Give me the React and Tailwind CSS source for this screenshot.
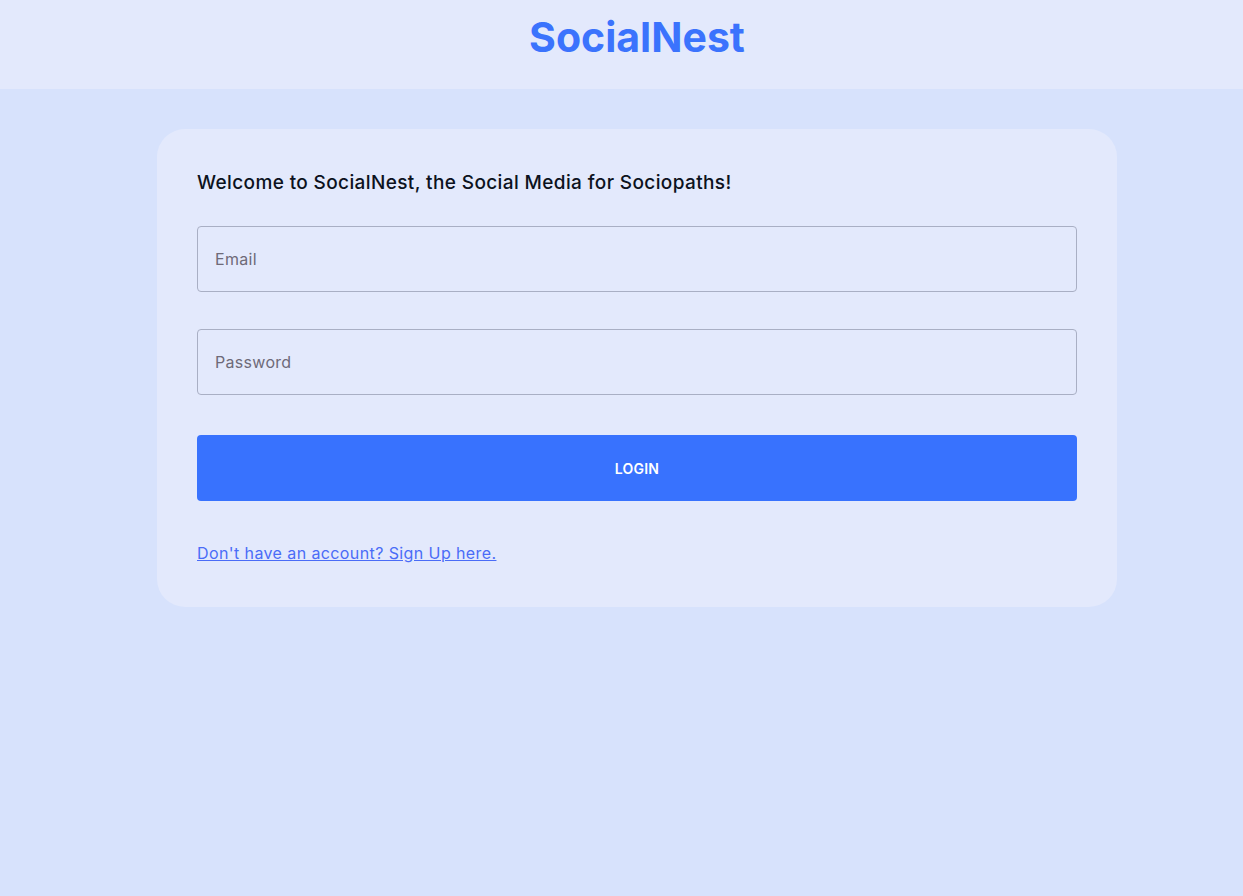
export default function App() {
  return (
    <div className="min-h-[896px] bg-[#d7e2fc]" style={{ fontFamily: 'Inter, "Open Sans", sans-serif' }}>
      <header className="h-[89px] bg-[#e3e9fc] flex items-center justify-center pl-[31px]">
        <h1 className="text-[41px] font-bold text-[#3b73fd] tracking-[0px] leading-none -mt-[14px]">SocialNest</h1>
      </header>
      <main className="flex justify-center pt-10 pl-[31px]">
        <div className="w-[960px] bg-[#e3e9fc] rounded-[28px] px-10 pt-10 pb-[42px]">
          <p className="text-[19px] leading-[27px] font-medium text-[#0c1220] tracking-[0.38px]">
            Welcome to SocialNest, the Social Media for Sociopaths!
          </p>
          <div className="mt-[30px] flex flex-col gap-[37px]">
            <input
              type="email"
              placeholder="Email"
              className="h-[66px] w-full rounded-[4px] border border-[#a9afc4] bg-transparent px-[17px] text-[16px] tracking-[0.3px] text-[#222] placeholder:text-[#6e6a78] outline-none"
            />
            <input
              type="password"
              placeholder="Password"
              className="h-[66px] w-full rounded-[4px] border border-[#a9afc4] bg-transparent px-[17px] text-[16px] tracking-[0.3px] text-[#222] placeholder:text-[#6e6a78] outline-none"
            />
          </div>
          <button className="mt-10 h-[66px] w-full rounded-[4px] bg-[#3872fe] text-white text-[14px] font-semibold tracking-[0.2px]">
            LOGIN
          </button>
          <div className="mt-[40px] leading-[24px]">
            <a href="#" className="text-[16px] text-[#4a6cf7] underline tracking-[0.4px]">
              Don't have an account? Sign Up here.
            </a>
          </div>
        </div>
      </main>
    </div>
  );
}
